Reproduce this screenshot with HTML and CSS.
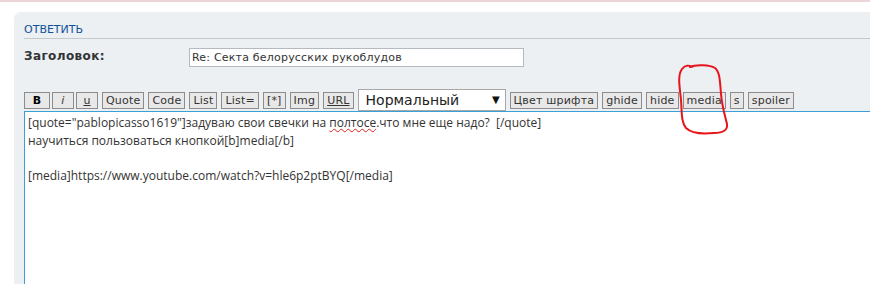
FILE: index.html
```html
<!DOCTYPE html>
<html lang="ru">
<head>
    <meta charset="UTF-8">
    <title>Ответить</title>
    <link rel="stylesheet" href="styles.css">
</head>
<body>
    <div class="top-strip"></div>
    <div class="panel">
        <h3 class="panel-title">Ответить</h3>
        <div class="subject-row">
            <label class="subject-label">Заголовок:</label>
            <input class="subject-input" type="text" value="Re: Секта белорусских рукоблудов">
        </div>

        <div class="toolbar">
            <button class="bb bb-b">B</button>
            <button class="bb bb-i">i</button>
            <button class="bb bb-u">u</button>
            <button class="bb">Quote</button>
            <button class="bb">Code</button>
            <button class="bb">List</button>
            <button class="bb">List=</button>
            <button class="bb">[*]</button>
            <button class="bb">Img</button>
            <button class="bb bb-url">URL</button>
            <div class="size-select">Нормальный <span class="arrow">▼</span></div>
            <button class="bb">Цвет шрифта</button>
            <button class="bb">ghide</button>
            <button class="bb">hide</button>
            <button class="bb">media</button>
            <button class="bb">s</button>
            <button class="bb">spoiler</button>
        </div>

        <div class="message">
            <div>[quote="pablopicasso1619"]задуваю свои свечки на <span class="typo">полтосе</span>.что мне еще надо?&nbsp; [/quote]</div>
            <div>научиться пользоваться кнопкой[b]media[/b]</div>
            <div>&nbsp;</div>
            <div>[media]https://www.youtube.com/watch?v=hle6p2ptBYQ[/media]</div>
        </div>
    </div>

    <!-- пометка красным вокруг кнопки media -->
    <svg class="scribble" width="70" height="80" viewBox="0 0 70 80">
        <path d="M20 7 C26 4 40 5 45 8 C50 12 50 22 51 34 C52 46 55 56 57 64 C58 70 53 73 44 73 C34 74 22 74 16 68 C11 62 12 52 11 40 C10 28 7 16 12 9 C15 5 19 5 22 7"
              fill="none" stroke="#e8141b" stroke-width="2" stroke-linecap="round"/>
    </svg>
</body>
</html>
```

FILE: styles.css
```css
html, body {
    margin: 0;
    padding: 0;
    background: #fff;
    overflow: hidden;
}
body {
    font-family: "DejaVu Sans", Verdana, sans-serif;
    font-size: 11px;
    color: #333;
    position: relative;
    height: 284px;
}
.top-strip {
    height: 2px;
    background: #ecd4d8;
    margin-bottom: 10px;
}
.panel {
    margin-left: 14px;
    background: #ecf0f3;
    border-top-left-radius: 7px;
    padding: 11px 0 0 10px;
    height: 300px;
}
.panel-title {
    margin: 0;
    font-size: 11px;
    font-weight: normal;
    text-transform: uppercase;
    color: #115098;
    padding-bottom: 2px;
    border-bottom: 1px solid #c4c9cc;
    line-height: 13px;
}
.subject-row {
    display: flex;
    align-items: flex-start;
    margin-top: 9px;
}
.subject-label {
    width: 165px;
    font-size: 12px;
    font-weight: bold;
    color: #333;
    padding-top: 1px;
    letter-spacing: 0.4px;
}
.subject-input {
    width: 329px;
    height: 17px;
    margin: 0;
    padding: 0 2px;
    border: 1px solid #b4bac0;
    background: #fff;
    font-family: "DejaVu Sans", Verdana, sans-serif;
    font-size: 11px;
    letter-spacing: 0.2px;
    color: #333;
    box-sizing: content-box;
}
.toolbar {
    display: flex;
    align-items: center;
    gap: 4px;
    margin-top: 22px;
    height: 22px;
}
.bb {
    height: 17px;
    margin: 0;
    padding: 0 3px;
    border: 1px solid #8c8c8c;
    background: #e8e8e8;
    font-family: "DejaVu Sans", Verdana, sans-serif;
    font-size: 11px;
    letter-spacing: 0.2px;
    color: #333;
    line-height: 15px;
}
.bb-b {
    width: 26px;
    font-weight: bold;
    color: #000;
}
.bb-i {
    width: 22px;
    font-style: italic;
    margin-left: -2px;
}
.bb-u {
    width: 22px;
    text-decoration: underline;
    margin-left: -2px;
}
.bb-url {
    text-decoration: underline;
}
.size-select {
    width: 134px;
    height: 20px;
    border: 1px solid #a8a8a8;
    background: #fff;
    font-size: 14px;
    line-height: 20px;
    padding: 0 5px 0 7px;
    color: #222;
    display: flex;
    justify-content: space-between;
}
.size-select .arrow {
    font-size: 10px;
    color: #111;
}
.message {
    margin-top: 0;
    height: 220px;
    background: #fff;
    border: 1px solid #3b9fd8;
    border-right: none;
    padding: 2px 3px;
    font-family: "Open Sans", sans-serif;
    font-size: 12px;
    line-height: 17.5px;
    color: #333;
}
.typo {
    text-decoration: underline wavy #e02020;
    text-decoration-thickness: 1px;
}
.scribble {
    position: absolute;
    left: 670px;
    top: 60px;
}
```
